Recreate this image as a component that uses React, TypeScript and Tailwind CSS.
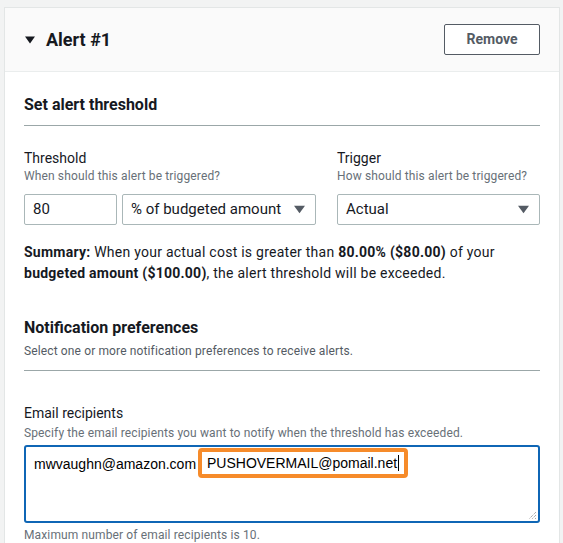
import React from 'react';

const Caret = ({ className }: { className?: string }) => (
  <svg viewBox="0 0 10 8" className={className} fill="currentColor">
    <path d="M0 0.5h10L5 7.5z" />
  </svg>
);

const Select = ({ value, className }: { value: string; className: string }) => (
  <div
    className={`h-[31px] flex items-center justify-between border border-[#aab7b8] rounded-[2px] pl-[8px] pr-[10px] text-[15px] text-[#16191f] ${className}`}
  >
    <span>{value}</span>
    <Caret className="w-[11px] h-[9px] text-[#545b64]" />
  </div>
);

const App = () => {
  return (
    <div
      className="min-h-screen bg-[#f2f3f3] pt-[7px] pl-[4px] pr-[3px] text-[#16191f]"
      style={{ fontFamily: 'Roboto, "Liberation Sans", sans-serif' }}
    >
      <div className="bg-white border-l border-t border-r border-[#e3e6e6] h-[536px]">
        <div className="h-[64px] bg-[#fafafa] border-b border-[#eaeded] flex items-center justify-between pl-[20px] pr-[19px]">
          <div className="flex items-center gap-[11px]">
            <Caret className="w-[10px] h-[8px] text-[#16191f]" />
            <span className="text-[18px] font-bold">Alert #1</span>
          </div>
          <button className="w-[96px] h-[31px] border border-[#545b64] rounded-[2px] text-[14px] font-bold text-[#545b64] bg-white">
            Remove
          </button>
        </div>

        <div className="pl-[19px] pr-[19px] pt-[23px]">
          <div className="text-[16px] leading-[20px] font-bold">Set alert threshold</div>
          <div className="mt-[10px] border-b border-[#9ba7a8]" />

          <div className="mt-[22px] flex">
            <div className="w-[292px]">
              <div className="text-[14px] leading-[20px]">Threshold</div>
              <div className="text-[12px] leading-[16px] tracking-[0.13px] text-[#687078]">
                When should this alert be triggered?
              </div>
              <div className="mt-[10px] flex gap-[5px]">
                <div className="w-[93px] h-[31px] flex items-center border border-[#aab7b8] rounded-[2px] pl-[8px] text-[15px]">
                  80
                </div>
                <Select value="% of budgeted amount" className="flex-1" />
              </div>
            </div>
            <div className="ml-[21px] w-[203px]">
              <div className="text-[14px] leading-[20px]">Trigger</div>
              <div className="text-[12px] leading-[16px] tracking-[0.13px] text-[#687078]">
                How should this alert be triggered?
              </div>
              <div className="mt-[10px]">
                <Select value="Actual" className="w-full" />
              </div>
            </div>
          </div>

          <p className="mt-[17px] text-[14px] leading-[21px] tracking-[0.25px] text-[#16191f]">
            <b>Summary:</b> When your actual cost is greater than <b>80.00% ($80.00)</b> of your{' '}
            <b>budgeted amount ($100.00)</b>, the alert threshold will be exceeded.
          </p>

          <div className="mt-[34px] text-[16px] leading-[20px] font-bold">Notification preferences</div>
          <div className="mt-[5px] text-[12px] leading-[16px] tracking-[0.13px] text-[#545b64]">
            Select one or more notification preferences to receive alerts.
          </div>
          <div className="mt-[11px] border-b border-[#9ba7a8]" />

          <div className="mt-[32px] text-[14px] leading-[20px]">Email recipients</div>
          <div className="mt-[2px] text-[12px] leading-[16px] tracking-[0.13px] text-[#687078]">
            Specify the email recipients you want to notify when the threshold has exceeded.
          </div>
          <div className="relative mt-[4px] h-[78px] border-2 border-[#0f66b5] rounded-[3px]">
            <div
              className="pl-[8px] pt-[8px] text-[14px] leading-[18px] text-black"
              style={{ fontFamily: '"Liberation Sans", Arial, sans-serif' }}
            >
              mwvaughn@amazon.com
            </div>
            <div
              className="absolute left-[172px] top-[1px] w-[210px] h-[30px] border-[4px] border-[#f68b2a] rounded-[4px] bg-white flex items-center pl-[5px] text-[14px] text-black"
              style={{ fontFamily: '"Liberation Sans", Arial, sans-serif' }}
            >
              PUSHOVERMAIL@pomail.net
              <span className="ml-[1px] w-px h-[16px] bg-black" />
            </div>
            <svg className="absolute right-[1px] bottom-[1px] w-[10px] h-[10px] text-[#888]" viewBox="0 0 10 10">
              <path d="M9 2L2 9M9 5L5 9M9 8L8 9" stroke="currentColor" strokeWidth="1" strokeDasharray="1 1" />
            </svg>
          </div>
          <div className="mt-[4px] text-[12px] leading-[16px] tracking-[0.13px] text-[#687078]">
            Maximum number of email recipients is 10.
          </div>
        </div>
      </div>
    </div>
  );
};

export default App;
